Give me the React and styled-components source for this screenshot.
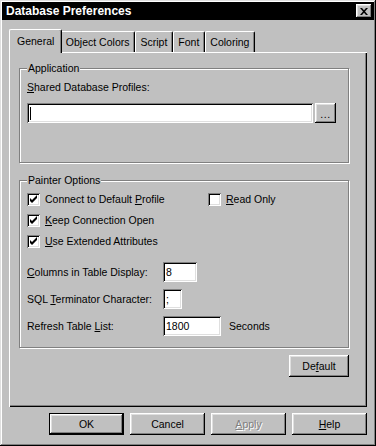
import React from 'react';
import styled, { createGlobalStyle } from 'styled-components';

const GlobalStyle = createGlobalStyle`
	html, body {
		margin: 0;
		padding: 0;
		background: #c0c0c0;
	}
	body {
		font-family: "Liberation Sans", Arial, sans-serif;
		font-size: 10.5px;
		color: #000;
	}
`;

const raised = `
	box-shadow: inset -1px -1px #000, inset 1px 1px #fff, inset -2px -2px #808080, inset 2px 2px #dfdfdf;
`;

const sunken = `
	box-shadow: inset 1px 1px #808080, inset -1px -1px #fff, inset 2px 2px #000, inset -2px -2px #dfdfdf;
`;

const Window = styled.div`
	width: 376px;
	height: 446px;
	box-sizing: border-box;
	padding: 2px;
	background: #c0c0c0;
	box-shadow: inset -1px -1px #000, inset 1px 1px #dfdfdf, inset -2px -2px #808080, inset 2px 2px #fff;
	display: flex;
	flex-direction: column;
`;

const TitleBar = styled.div`
	height: 18px;
	background: #000;
	color: #fff;
	display: flex;
	align-items: center;
	justify-content: space-between;
	padding: 0 2px 0 4px;
	font-size: 12px;
	font-weight: 700;
`;

const CloseButton = styled.div`
	width: 16px;
	height: 14px;
	background: #c0c0c0;
	${raised}
	display: flex;
	align-items: center;
	justify-content: center;
`;

const Body = styled.div`
	display: flex;
	flex-direction: column;
	padding: 0 7px;
`;

const TabList = styled.div`
	display: flex;
	align-items: flex-end;
	margin-top: 9px;
	padding-left: 2px;
`;

const Tab = styled.div`
	position: relative;
	z-index: ${(p) => (p.$active ? 1 : 0)};
	height: ${(p) => (p.$active ? 24 : 21)}px;
	box-sizing: border-box;
	padding: ${(p) => (p.$active ? '0 7px 1px' : '0 4.5px')};
	margin: ${(p) => (p.$active ? '0 -2px -1px' : '0')};
	background: #c0c0c0;
	border-top: 1px solid #fff;
	border-left: 1px solid #fff;
	border-right: 1px solid #000;
	border-radius: 2px 2px 0 0;
	box-shadow: inset -1px 0 #808080;
	display: flex;
	align-items: center;
	white-space: nowrap;
`;

const Panel = styled.div`
	height: 355px;
	box-sizing: border-box;
	display: flex;
	flex-direction: column;
	padding: 10px 18px 0 10px;
	box-shadow: inset 1px 1px #fff, inset -1px -1px #000, inset -2px -2px #808080;
`;

const Group = styled.fieldset`
	margin: ${(p) => p.$top}px 0 0;
	width: 330px;
	box-sizing: border-box;
	border: 1px solid #808080;
	box-shadow: 1px 1px 0 #fff, inset 1px 1px 0 #fff;
	padding: ${(p) => p.$pad};
	min-width: 0;
`;

const Legend = styled.legend`
	padding: 0 1px;
	line-height: 13px;
	background: #c0c0c0;
`;

const Label = styled.div`
	line-height: 13px;
	white-space: nowrap;
`;

const InputRow = styled.div`
	display: flex;
	margin-top: 9px;
	gap: 2px;
`;

const Field = styled.div`
	width: ${(p) => p.$width}px;
	height: 20px;
	box-sizing: border-box;
	background: #fff;
	${sunken}
	display: flex;
	align-items: center;
	padding-left: 3px;
	line-height: 13px;
`;

const Caret = styled.span`
	width: 1px;
	height: 13px;
	background: #000;
`;

const BrowseButton = styled.div`
	width: 21px;
	height: 20px;
	box-sizing: border-box;
	${raised}
	display: flex;
	align-items: center;
	justify-content: center;
	padding-top: 2px;
	letter-spacing: 0.5px;
`;

const CheckGrid = styled.div`
	display: grid;
	grid-template-columns: 181px auto;
	row-gap: 8px;
`;

const CheckRow = styled.div`
	display: flex;
	align-items: center;
	gap: 5px;
	height: 13px;
	line-height: 13px;
	white-space: nowrap;
`;

const Box = styled.div`
	width: 13px;
	height: 13px;
	box-sizing: border-box;
	background: #fff;
	${sunken}
	flex: none;
`;

const FormGrid = styled.div`
	display: grid;
	grid-template-columns: 136px max-content max-content;
	grid-auto-rows: 20px;
	row-gap: 7px;
	align-items: center;
	margin-top: 14px;
`;

const Unit = styled(Label)`
	margin-left: 8px;
`;

const Button = styled.div`
	width: ${(p) => p.$width || 75}px;
	height: 22px;
	box-sizing: border-box;
	display: flex;
	align-items: center;
	justify-content: center;
	background: #c0c0c0;
	color: ${(p) => (p.$disabled ? '#808080' : '#000')};
	text-shadow: ${(p) => (p.$disabled ? '1px 1px 0 #fff' : 'none')};
	box-shadow: ${(p) =>
		p.$default
			? 'inset 0 0 0 1px #000, inset -2px -2px #000, inset 2px 2px #fff, inset -3px -3px #808080, inset 3px 3px #dfdfdf'
			: 'inset -1px -1px #000, inset 1px 1px #fff, inset -2px -2px #808080, inset 2px 2px #dfdfdf'};
`;

const DefaultButton = styled(Button)`
	align-self: flex-end;
	margin-top: 7px;
`;

const ButtonRow = styled.div`
	display: flex;
	justify-content: flex-end;
	gap: 6px;
	margin-top: 6px;
`;

function CheckBox({ checked, children }) {
	return (
		<CheckRow>
			<Box>
				{checked && (
					<svg width="13" height="13" viewBox="0 0 13 13">
						<polygon points="3,5 5,7 10,2 10,5 5,10 3,8" fill="#000" />
					</svg>
				)}
			</Box>
			<span>{children}</span>
		</CheckRow>
	);
}

const tabs = ['General', 'Object Colors', 'Script', 'Font', 'Coloring'];

export default function App() {
	return (
		<>
			<GlobalStyle />
			<Window>
				<TitleBar>
					<span>Database Preferences</span>
					<CloseButton>
						<svg width="8" height="7" viewBox="0 0 8 7">
							<path d="M0 0 L2 0 L4 2.2 L6 0 L8 0 L5 3.5 L8 7 L6 7 L4 4.8 L2 7 L0 7 L3 3.5 Z" fill="#000" />
						</svg>
					</CloseButton>
				</TitleBar>
				<Body>
					<TabList>
						{tabs.map((t, i) => (
							<Tab key={t} $active={i === 0}>{t}</Tab>
						))}
					</TabList>
					<Panel>
						<Group $top={0} $pad="6px 7px 39px">
							<Legend>Application</Legend>
							<Label><u>S</u>hared Database Profiles:</Label>
							<InputRow>
								<Field $width={286}><Caret /></Field>
								<BrowseButton>...</BrowseButton>
							</InputRow>
						</Group>
						<Group $top={11} $pad="6px 7px 11px">
							<Legend>Painter Options</Legend>
							<CheckGrid>
								<CheckBox checked>Connect to Default <u>P</u>rofile</CheckBox>
								<CheckBox><u>R</u>ead Only</CheckBox>
								<CheckBox checked><u>K</u>eep Connection Open</CheckBox>
								<span />
								<CheckBox checked><u>U</u>se Extended Attributes</CheckBox>
							</CheckGrid>
							<FormGrid>
								<Label><u>C</u>olumns in Table Display:</Label>
								<Field $width={34}>8</Field>
								<span />
								<Label>SQL <u>T</u>erminator Character:</Label>
								<Field $width={19}>;</Field>
								<span />
								<Label>Refresh Table <u>L</u>ist:</Label>
								<Field $width={58}>1800</Field>
								<Unit>Seconds</Unit>
							</FormGrid>
						</Group>
						<DefaultButton $width={60}>De<u>f</u>ault</DefaultButton>
					</Panel>
					<ButtonRow>
						<Button $default>OK</Button>
						<Button>Cancel</Button>
						<Button $disabled><u>A</u>pply</Button>
						<Button><u>H</u>elp</Button>
					</ButtonRow>
				</Body>
			</Window>
		</>
	);
}
